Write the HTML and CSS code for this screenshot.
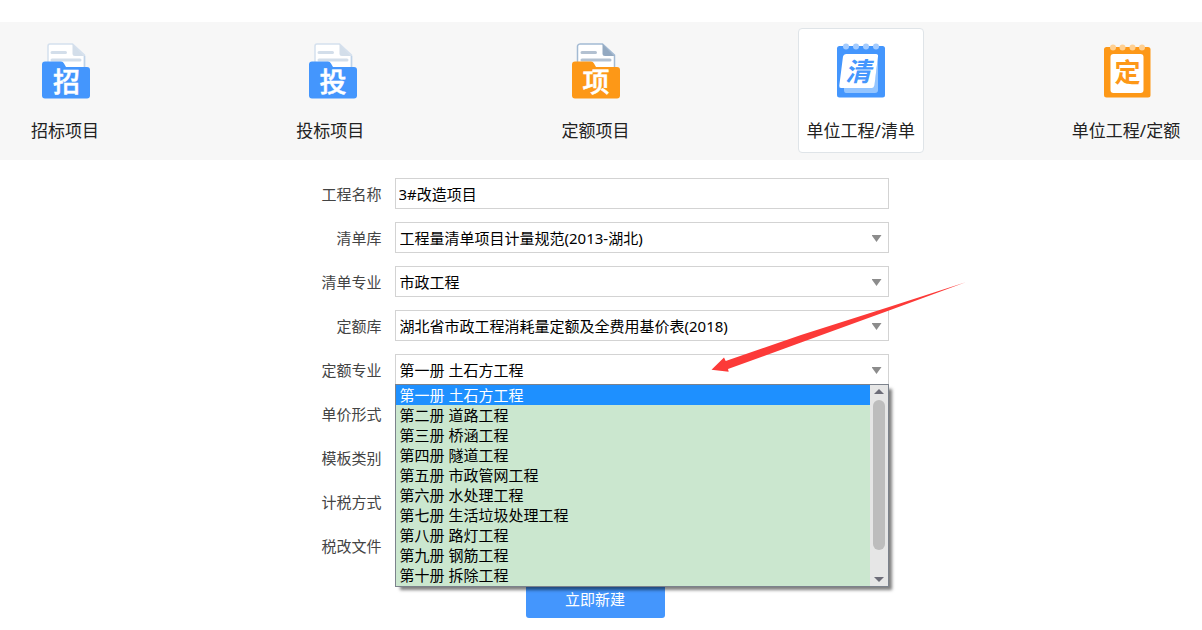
FILE: index.html
```html
<!DOCTYPE html>
<html lang="zh-CN">
<head>
<meta charset="utf-8">
<meta name="viewport" content="width=device-width, initial-scale=1">
<title>新建工程</title>
<link rel="stylesheet" href="styles.css">
</head>
<body>
<nav class="types" aria-label="工程类型">
  <button class="type" type="button">
    <svg class="type-icon" viewBox="-2 0 50 56" aria-hidden="true">
      <path d="M8 1H30.500L42.500 12V40H6V3Q6 1 8 1Z" fill="#fff" stroke="#d5e1ee" stroke-width="1.500"/>
      <path d="M30.500 1V10.500Q30.500 13 33 13H42.500Z" fill="#d3deea"/>
      <path d="M42.500 13V26" stroke="#bfd3e8" stroke-width="1.500"/>
      <path d="M10 9.500H23.500M10 17H38" stroke="#d3deea" stroke-width="3" stroke-linecap="round"/>
      <path d="M3 18.500H19Q21 18.500 22 20.500L24 24H45Q48 24 48 27V52.500Q48 55.500 45 55.500H3Q0 55.500 0 52.500V21.500Q0 18.500 3 18.500Z" fill="#4496fd"/>
      <text class="folder-mark" x="24.500" y="49">招</text>
    </svg>
    <span class="type-name">招标项目</span>
  </button>
  <button class="type" type="button">
    <svg class="type-icon" viewBox="-4 0 50 56" aria-hidden="true">
      <path d="M8 1H30.500L42.500 12V40H6V3Q6 1 8 1Z" fill="#fff" stroke="#d5e1ee" stroke-width="1.500"/>
      <path d="M30.500 1V10.500Q30.500 13 33 13H42.500Z" fill="#d3deea"/>
      <path d="M42.500 13V26" stroke="#bfd3e8" stroke-width="1.500"/>
      <path d="M10 9.500H23.500M10 17H38" stroke="#d3deea" stroke-width="3" stroke-linecap="round"/>
      <path d="M3 18.500H19Q21 18.500 22 20.500L24 24H45Q48 24 48 27V52.500Q48 55.500 45 55.500H3Q0 55.500 0 52.500V21.500Q0 18.500 3 18.500Z" fill="#4496fd"/>
      <text class="folder-mark" x="24" y="49">投</text>
    </svg>
    <span class="type-name">投标项目</span>
  </button>
  <button class="type" type="button">
    <svg class="type-icon" viewBox="-1 0 50 56" aria-hidden="true">
      <path d="M8 1H30.500L42.500 12V40H5.500V3Q6 1 8 1Z" fill="#fff" stroke="#a3bad3" stroke-width="1.500"/>
      <path d="M30.500 1V10.500Q30.500 13 33 13H42.500Z" fill="#93a9c1"/>
      <path d="M10 9.500H23.500M10 17H38" stroke="#b3c1d1" stroke-width="3" stroke-linecap="round"/>
      <path d="M3 18.500H19Q21 18.500 22 20.500L24 24H45Q48 24 48 27V52.500Q48 55.500 45 55.500H3Q0 55.500 0 52.500V21.500Q0 18.500 3 18.500Z" fill="#fd9817"/>
      <text class="folder-mark" x="24" y="49">项</text>
    </svg>
    <span class="type-name">定额项目</span>
  </button>
  <button class="type type-active" type="button" aria-current="true">
    <svg class="type-icon" viewBox="-1 0 50 56" aria-hidden="true">
      <rect x="0" y="3" width="48" height="51.500" rx="2.500" fill="#4496fd"/>
      <path d="M37 44L41 14V47Q41 50 38 50H9Q7 50 7 47V43Z" fill="#94c5ff"/>
      <path d="M9 11H39Q41.500 11 41 13.500L37.500 42Q37 45 34.500 45H4Q2 45 2.300 42.500L6 13.500Q6.500 11 9 11Z" fill="#fff"/>
      <g fill="#a3cbff"><circle cx="9" cy="3.500" r="3"/><circle cx="19" cy="3.500" r="3"/><circle cx="29" cy="3.500" r="3"/><circle cx="39" cy="3.500" r="3"/></g>
      <text class="pad-mark pad-mark-blue" x="21" y="38">清</text>
    </svg>
    <span class="type-name">单位工程/清单</span>
  </button>
  <button class="type" type="button">
    <svg class="type-icon" viewBox="-2 0 50 56" aria-hidden="true">
      <rect x="1" y="4" width="46.500" height="50.500" rx="2.500" fill="#fd9817"/>
      <rect x="7.500" y="11" width="33" height="39" rx="3" fill="#fff"/>
      <g fill="#ffd092"><circle cx="10" cy="4.500" r="3"/><circle cx="19.500" cy="4.500" r="3"/><circle cx="29.500" cy="4.500" r="3"/><circle cx="39" cy="4.500" r="3"/></g>
      <text class="pad-mark pad-mark-orange" x="24.500" y="39">定</text>
    </svg>
    <span class="type-name">单位工程/定额</span>
  </button>
</nav>

<main class="content">
  <form class="form">
    <div class="row">
      <label class="label" for="name">工程名称</label>
      <div class="field"><input class="control control-text" id="name" type="text" value="3#改造项目"></div>
    </div>
    <div class="row">
      <label class="label" for="list-lib">清单库</label>
      <div class="field field-select"><select class="control" id="list-lib"><option>工程量清单项目计量规范(2013-湖北)</option></select></div>
    </div>
    <div class="row">
      <label class="label" for="list-major">清单专业</label>
      <div class="field field-select"><select class="control" id="list-major"><option>市政工程</option></select></div>
    </div>
    <div class="row">
      <label class="label" for="quota-lib">定额库</label>
      <div class="field field-select"><select class="control" id="quota-lib"><option>湖北省市政工程消耗量定额及全费用基价表(2018)</option></select></div>
    </div>
    <div class="row">
      <label class="label" for="quota-major">定额专业</label>
      <div class="field field-select">
        <select class="control" id="quota-major"><option>第一册 土石方工程</option></select>
        <div class="menu">
          <ul class="options" role="listbox" aria-label="定额专业">
            <li class="option option-selected" role="option" aria-selected="true">第一册 土石方工程</li>
            <li class="option" role="option">第二册 道路工程</li>
            <li class="option" role="option">第三册 桥涵工程</li>
            <li class="option" role="option">第四册 隧道工程</li>
            <li class="option" role="option">第五册 市政管网工程</li>
            <li class="option" role="option">第六册 水处理工程</li>
            <li class="option" role="option">第七册 生活垃圾处理工程</li>
            <li class="option" role="option">第八册 路灯工程</li>
            <li class="option" role="option">第九册 钢筋工程</li>
            <li class="option" role="option">第十册 拆除工程</li>
          </ul>
          <div class="scrollbar" aria-hidden="true">
            <svg class="scroll-arrow" viewBox="0 0 10 5"><path d="M0 5L5 0L10 5Z"/></svg>
            <div class="scroll-track"><div class="scroll-thumb"></div></div>
            <svg class="scroll-arrow" viewBox="0 0 10 5"><path d="M0 0L5 5L10 0Z"/></svg>
          </div>
        </div>
        <svg class="pointer" viewBox="0 0 255 90" aria-hidden="true"><path d="M0.500 87.700L13 75.500L14.700 79L90 53L178 25L254.700 0.300L178 28.500L90 60.500L17 87L17.700 89.800Z" fill="#fc3a38"/></svg>
      </div>
    </div>
    <div class="row">
      <label class="label" for="price-form">单价形式</label>
      <div class="field field-select"><select class="control" id="price-form"></select></div>
    </div>
    <div class="row">
      <label class="label" for="template">模板类别</label>
      <div class="field field-select"><select class="control" id="template"></select></div>
    </div>
    <div class="row">
      <label class="label" for="tax-mode">计税方式</label>
      <div class="field field-select"><select class="control" id="tax-mode"></select></div>
    </div>
    <div class="row">
      <label class="label" for="tax-file">税改文件</label>
      <div class="field field-select"><select class="control" id="tax-file"></select></div>
    </div>
    <button class="submit" type="button">立即新建</button>
  </form>
</main>
</body>
</html>
```

FILE: styles.css
```css
* {
  box-sizing: border-box;
}

body {
  margin: 0;
  padding-top: 22px;
  background: #fff;
  color: #000;
  font: 15px/20px "Noto Sans", "Noto Sans CJK SC", sans-serif;
}

button,
input,
select {
  font: inherit;
}

.types {
  display: flex;
  justify-content: space-between;
  padding: 6px 13px 7px 2px;
  background: #f7f7f7;
}

.type {
  display: flex;
  flex-direction: column;
  align-items: center;
  gap: 20px;
  width: 126px;
  padding: 14px 0 9px;
  border: 1px solid transparent;
  border-radius: 4px;
  background: none;
  color: #222;
}

.type-active {
  border-color: #dfe4e8;
  background: #fff;
}

.type-icon {
  width: 50px;
  height: 56px;
  overflow: visible;
}

.type-name {
  font-size: 17px;
  line-height: 24px;
  white-space: nowrap;
}

.folder-mark,
.pad-mark {
  font-family: "Noto Sans CJK SC", sans-serif;
  font-size: 27px;
  font-weight: 500;
  text-anchor: middle;
  fill: #fff;
}

.folder-mark {
  stroke: #fff;
  stroke-width: 0.5px;
}

.pad-mark {
  font-size: 26px;
  font-weight: 700;
}

.pad-mark-blue {
  font-style: italic;
  fill: #4496fd;
}

.pad-mark-orange {
  fill: #fd9817;
}

.content {
  display: flex;
  justify-content: center;
  padding: 18px 12px 12px 0;
}

.form {
  display: flex;
  flex-direction: column;
  gap: 13px;
}

.row {
  display: grid;
  grid-template-columns: 80px 494px;
  gap: 13px;
}

.label {
  align-self: center;
  color: #444;
  text-align: right;
}

.field {
  position: relative;
}

.control {
  display: block;
  width: 100%;
  height: 31px;
  padding: 0 24px 0 4px;
  border: 1px solid #d3d3d3;
  border-radius: 0;
  outline: 0;
  background: #fff;
  color: #000;
  appearance: none;
}

.control-text {
  padding: 0 4px 0 3px;
}

.field-select::after {
  content: "";
  position: absolute;
  top: 13px;
  right: 7px;
  width: 10px;
  height: 7px;
  background: #8c8c8c;
  clip-path: polygon(0 0, 100% 0, 50% 100%);
}

.menu {
  position: absolute;
  z-index: 1;
  top: 30px;
  left: 0;
  display: flex;
  width: 100%;
  border: 1px solid #7c828c;
  background: #cbe7cf;
  box-shadow: 4px 4px 3px -1px rgba(0, 0, 0, 0.5);
}

.options {
  flex: 1;
  margin: 0;
  padding: 0 0 1px;
  list-style: none;
}

.option {
  padding-left: 4px;
  line-height: 20px;
}

.option-selected {
  background: #1e90ff;
  color: #fff;
}

.scrollbar {
  display: flex;
  flex-direction: column;
  align-items: center;
  gap: 6px;
  width: 18px;
  padding: 4px 0;
  background: #e6e6e6;
}

.scroll-arrow {
  width: 10px;
  height: 5px;
  fill: #6d6d78;
}

.scroll-track {
  flex: 1;
  width: 12px;
}

.scroll-thumb {
  height: 88%;
  border-radius: 6px;
  background: #bdbdbd;
}

.pointer {
  position: absolute;
  z-index: 2;
  top: -72px;
  left: 316px;
  width: 255px;
  height: 90px;
  pointer-events: none;
}

.submit {
  align-self: center;
  width: 139px;
  height: 38px;
  margin-top: 6px;
  border: 0;
  border-radius: 3px;
  background: #4496fd;
  color: #fff;
}
```
